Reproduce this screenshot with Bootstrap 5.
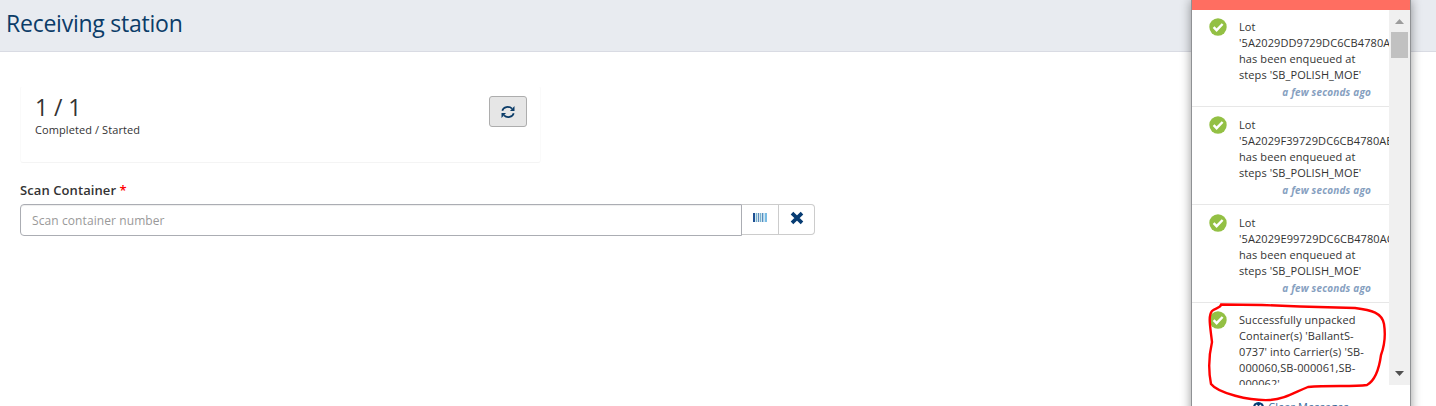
<!DOCTYPE html>
<html lang="en">
<head>
<meta charset="utf-8">
<title>Receiving station</title>
<link href="https://cdn.jsdelivr.net/npm/bootstrap@5.3.0/dist/css/bootstrap.min.css" rel="stylesheet">
<style>
body{font-family:"Open Sans","Noto Sans",sans-serif;font-size:11px;line-height:16px;letter-spacing:.09px;color:#333;height:406px;overflow:hidden;background:#fff}
.page-head{height:52px;background:#e8ebf0;border-bottom:1px solid #d9dbe3;padding:7px 0 0 6px}
.page-head h1{font-size:23px;line-height:32px;color:#0b3c68;font-weight:400;letter-spacing:-.24px}
.work{padding:34px 20px 0}
.counter{width:521px;height:77px;border:1px solid #f4f4f4;border-color:transparent #fafafa #f4f4f4;border-radius:3px;padding:9px 13px 0 14px}
.count{font-size:23px;line-height:22px;padding-bottom:4px;letter-spacing:-.1px}
.btn-refresh{width:38px;height:31px;background:#e6e6e6;border:1px solid #adadad;border-radius:3px}
.scan-label{font-size:13px;line-height:18px;font-weight:600;margin:18px 0 5px}
.required{color:#f00}
.scan{width:795px;height:32px}
.scan .form-control{font-size:12px;line-height:18px;padding:5px 11px;border:1px solid #abadb3;border-radius:4px 0 0 4px;box-shadow:inset 0 1px 1px rgba(0,0,0,.07);height:32px;letter-spacing:.09px}
.scan .form-control::placeholder{color:#999}
.scan .btn{width:36px;height:31px;border:1px solid #ccc;border-left:0;background:#fff;border-radius:0}
.scan .btn-barcode{width:37px}
.scan .btn-clear{border-radius:0 4px 4px 0}
.messages{left:1191px;top:0;width:220px;height:420px;background:#fff;border:solid #8f9194;border-width:0 1px;box-shadow:0 0 10px rgba(0,0,0,.4)}
.accent{height:10px;background:#ff6e61}
.feed{height:375px}
.feed-items{width:197px;margin-top:-1px}
.entry{height:98px;border-bottom:1px solid #e7e7e7;padding:10px 17px 0 17px}
.entry:last-child{padding-top:9px}
.entry svg{margin-top:-1px}
.entry .body-text{width:132px;margin-left:12px}
.ago{font-size:10px;font-weight:700;font-style:italic;color:#86a0bf;margin-top:1px;letter-spacing:.17px}
.track{width:21px;background:#f0f0f0}
.thumb{width:17px;height:26px;background:#c1c1c1;margin-top:12px}
.clear{color:#3a6a9a;padding-top:14px}
.ink{left:1200px;top:296px}
</style>
</head>
<body class="position-relative">
<header class="page-head"><h1 class="m-0">Receiving station</h1></header>
<main class="work">
  <section class="counter d-flex justify-content-between align-items-start">
    <div><div class="count">1 / 1</div><div>Completed / Started</div></div>
    <button class="btn-refresh d-flex align-items-center justify-content-center p-0" aria-label="Refresh">
      <svg width="14" height="14" viewBox="0 0 14 14" fill="none" stroke="#0b3c68" stroke-width="1.700"><path d="M1.300 5.800C2.300 1.700 8 .8 11 3.600M12.700 8.200C11.700 12.300 6 13.200 3 10.400"/><path d="M13.500 1v5H9zM.5 13V8H5z" fill="#0b3c68" stroke="none"/></svg>
    </button>
  </section>
  <div class="scan-label">Scan Container <span class="required">*</span></div>
  <div class="scan d-flex">
    <input class="form-control" placeholder="Scan container number">
    <button class="btn btn-barcode p-0 d-flex flex-shrink-0 align-items-center justify-content-center" aria-label="Barcode"><svg class="mb-1" width="14" height="9" shape-rendering="crispEdges"><path fill="#1d4f92" d="M0 0h2v9H0z"/><path fill="#79b4cf" d="M3 0h1v9H3zM7 0h1v9H7z"/><path fill="#5c8abb" d="M5 0h1v9H5zM9 0h1v9H9z"/><path fill="#a9d8f2" d="M10 0h1v9h-1z"/><path fill="#79bce5" d="M12 0h2v9h-2z"/><path fill="#d4e5ee" d="M2 0h1v9H2zM4 0h1v9H4zM6 0h1v9H6zM8 0h1v9H8zM11 0h1v9h-1z"/></svg></button>
    <button class="btn btn-clear p-0 d-flex flex-shrink-0 align-items-center justify-content-center" aria-label="Clear"><svg class="mb-1" width="14" height="14" viewBox="0 0 14 14"><path d="M2 2.200l10 9.600M12 2.200L2 11.800" stroke="#073c73" stroke-width="3.700"/></svg></button>
  </div>
</main>
<svg class="d-none"><symbol id="ok" viewBox="0 0 18 18"><circle cx="9" cy="9" r="8.700" fill="#93c044"/><path d="M4.600 9.200l3 3 6-6.200" fill="none" stroke="#fff" stroke-width="2.400"/></symbol></svg>
<aside class="messages position-absolute">
  <div class="accent"></div>
  <div class="feed d-flex overflow-hidden">
    <div class="feed-items overflow-hidden flex-shrink-0">
      <div class="entry d-flex"><svg class="flex-shrink-0" width="18" height="18"><use href="#ok"/></svg><div class="body-text flex-shrink-0">Lot '5A2029DD9729DC6CB4780A96 has been enqueued at steps 'SB_POLISH_MOE'<div class="ago text-end">a few seconds ago</div></div></div>
      <div class="entry d-flex"><svg class="flex-shrink-0" width="18" height="18"><use href="#ok"/></svg><div class="body-text flex-shrink-0">Lot '5A2029F39729DC6CB4780AE6 has been enqueued at steps 'SB_POLISH_MOE'<div class="ago text-end">a few seconds ago</div></div></div>
      <div class="entry d-flex"><svg class="flex-shrink-0" width="18" height="18"><use href="#ok"/></svg><div class="body-text flex-shrink-0">Lot '5A2029E99729DC6CB4780AC6 has been enqueued at steps 'SB_POLISH_MOE'<div class="ago text-end">a few seconds ago</div></div></div>
      <div class="entry d-flex"><svg class="flex-shrink-0" width="18" height="18"><use href="#ok"/></svg><div class="body-text flex-shrink-0">Successfully unpacked Container(s) 'BallantS-0737' into Carrier(s) 'SB-000060,SB-000061,SB-000062'</div></div>
    </div>
    <div class="track d-flex flex-column align-items-center flex-shrink-0">
      <svg class="flex-shrink-0" width="9" height="5" style="margin-top:9px"><path d="M4.500 0L9 5H0z" fill="#9c9c9c"/></svg>
      <div class="thumb flex-shrink-0 mt-2"></div>
      <svg class="flex-shrink-0 mt-auto" width="9" height="5" style="margin-bottom:9px"><path d="M0 0h9L4.500 5z" fill="#505050"/></svg>
    </div>
  </div>
  <div class="clear d-flex align-items-center justify-content-center gap-1"><svg width="11" height="11" viewBox="0 0 11 11"><circle cx="5.500" cy="5.500" r="5.500" fill="#073c73"/><path d="M3 3l5 5M8 3L3 8" stroke="#fff" stroke-width="1.700"/></svg><span>Clear Messages</span></div>
</aside>
<svg class="ink position-absolute" width="190" height="110" viewBox="1200 296 190 110" fill="none" stroke="#f00" stroke-width="2.400" stroke-linecap="round" stroke-linejoin="round"><path d="M1221 304.500L1262 305L1300 306.500L1355 308C1372 310 1382 313 1384 324C1386 337 1384 347 1381 355C1379 370 1374 381 1367 385C1352 387 1330 385 1308 387C1293 393 1285 399 1270 400C1249 401 1218 393 1211 384C1208 369 1209 355 1212 342C1210 325 1208 316 1212 311C1215 308 1221 308 1221 304.500"/></svg>
<script src="https://cdn.jsdelivr.net/npm/bootstrap@5.3.0/dist/js/bootstrap.bundle.min.js"></script>
</body>
</html>
